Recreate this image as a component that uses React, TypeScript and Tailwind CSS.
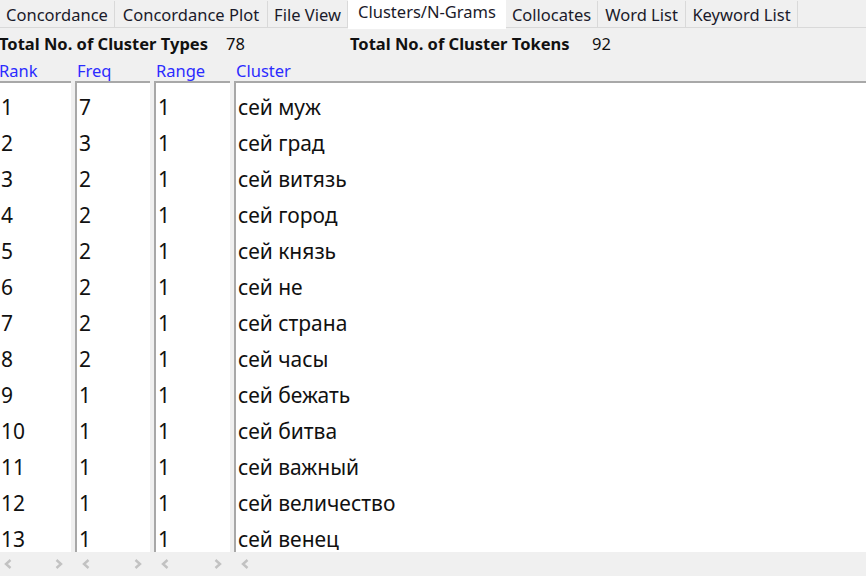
import React from "react";

const tabs = [
  { label: "Concordance", w: 115 },
  { label: "Concordance Plot", w: 153 },
  { label: "File View", w: 80 },
  { label: "Clusters/N-Grams", w: 158, active: true },
  { label: "Collocates", w: 92 },
  { label: "Word List", w: 88 },
  { label: "Keyword List", w: 112 },
];

const rows: [string, string, string, string][] = [
  ["1", "7", "1", "сей муж"],
  ["2", "3", "1", "сей град"],
  ["3", "2", "1", "сей витязь"],
  ["4", "2", "1", "сей город"],
  ["5", "2", "1", "сей князь"],
  ["6", "2", "1", "сей не"],
  ["7", "2", "1", "сей страна"],
  ["8", "2", "1", "сей часы"],
  ["9", "1", "1", "сей бежать"],
  ["10", "1", "1", "сей битва"],
  ["11", "1", "1", "сей важный"],
  ["12", "1", "1", "сей величество"],
  ["13", "1", "1", "сей венец"],
];

const Chevron = ({ dir }: { dir: "l" | "r" }) => (
  <svg width="8" height="12" viewBox="0 0 8 12" className="shrink-0">
    <polyline
      points={dir === "l" ? "6.5,2 2,6 6.5,10" : "1.5,2 6,6 1.5,10"}
      fill="none"
      stroke="#c2c2c2"
      strokeWidth="2.4"
    />
  </svg>
);

const Column = ({
  values,
  className,
  right = true,
}: {
  values: string[];
  className: string;
  right?: boolean;
}) => (
  <div className={`flex flex-col shrink-0 ${className}`}>
    <div className="flex-1 bg-white border-t-2 border-l-2 border-t-[#a8a8a8] border-l-[#a8a8a8] overflow-hidden pt-[6px]">
      {values.map((v, i) => (
        <div key={i} className="h-[36px] leading-[36px] pl-[2px] text-[21px] text-[#111] whitespace-nowrap">
          {v}
        </div>
      ))}
    </div>
    <div className="h-[24px] flex items-center justify-between pl-[7px] pr-[8px]">
      <Chevron dir="l" />
      {right && <Chevron dir="r" />}
    </div>
  </div>
);

export default function App() {
  return (
    <div
      className="w-[866px] h-[576px] bg-[#f0f0f0] overflow-hidden flex flex-col"
      style={{ fontFamily: '"Noto Sans", "Open Sans", sans-serif' }}
    >
      <div className="h-[28px] flex border-b border-[#d9d9d9] shrink-0">
        {tabs.map((t) => (
          <div
            key={t.label}
            style={{ width: t.w }}
            className={
              t.active
                ? "bg-white h-[29px] -mb-px flex items-start justify-center text-[16.5px] text-[#1a1a2a] whitespace-nowrap"
                : "h-[27px] mt-[1px] pt-[2px] border-r border-[#d9d9d9] flex items-center justify-center text-[16.5px] text-[#1a1a2a] whitespace-nowrap"
            }
          >
            {t.label}
          </div>
        ))}
      </div>

      <div className="h-[30px] pt-[2px] flex items-center text-[16.5px] text-[#111] shrink-0 -ml-[1px]">
        <span className="font-bold w-[227px]">Total No. of Cluster Types</span>
        <span className="w-[124px]">78</span>
        <span className="font-bold w-[242px]">Total No. of Cluster Tokens</span>
        <span>92</span>
      </div>

      <div className="h-[23px] pt-[4px] flex items-center text-[16.5px] text-[#2b2bff] shrink-0 -ml-[1px]">
        <span className="w-[78px]">Rank</span>
        <span className="w-[79px]">Freq</span>
        <span className="w-[80px]">Range</span>
        <span>Cluster</span>
      </div>

      <div className="flex-1 flex gap-[4px] -ml-[3px] min-h-0">
        <Column values={rows.map((r) => r[0])} className="w-[74px]" />
        <Column values={rows.map((r) => r[1])} className="w-[75px]" />
        <Column values={rows.map((r) => r[2])} className="w-[76px]" />
        <Column values={rows.map((r) => r[3])} className="flex-1" right={false} />
      </div>
    </div>
  );
}
